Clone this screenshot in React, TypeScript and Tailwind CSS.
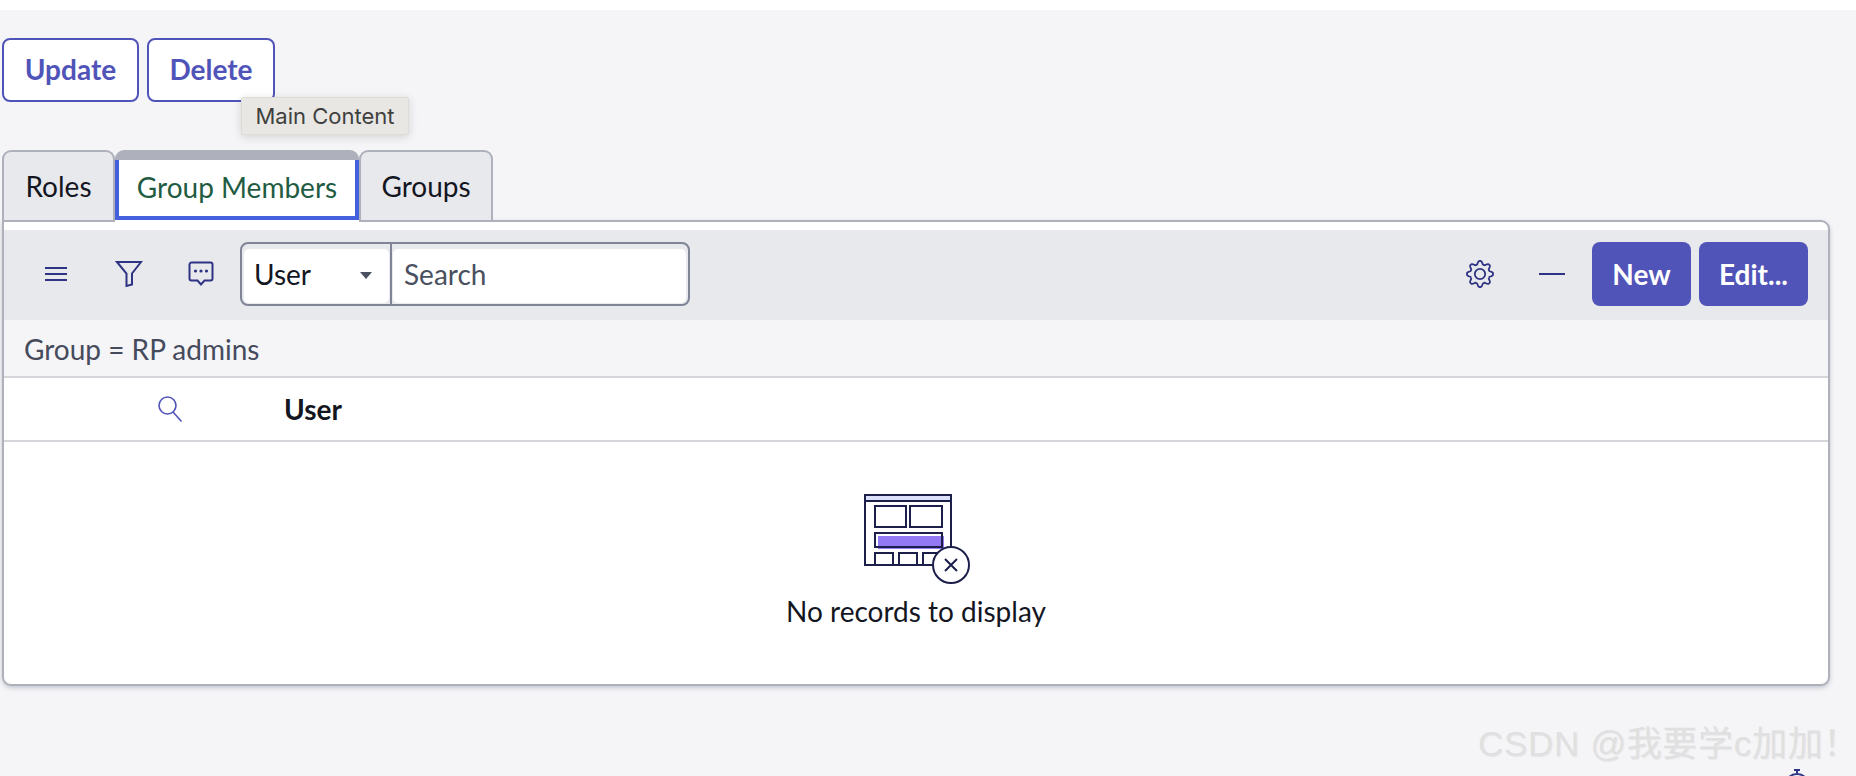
const navy = "#2e3383";

const MenuIcon = () => (
  <svg width="24" height="16" viewBox="0 0 24 16" fill="none" stroke={navy} strokeWidth="2">
    <path d="M1 2h22M1 8h22M1 14h22" />
  </svg>
);

const FilterIcon = () => (
  <svg width="28" height="28" viewBox="0 0 28 28" fill="none" stroke={navy} strokeWidth="2">
    <path d="M2 2h24L17 13.5V24.5L11.5 26V13.5Z" />
  </svg>
);

const ChatIcon = () => (
  <svg width="26" height="26" viewBox="0 0 26 26" fill="none" stroke={navy} strokeWidth="2">
    <path d="M3.5 1.5h19a2 2 0 0 1 2 2v14a2 2 0 0 1-2 2h-6L13 23.5 9.5 19.5h-6a2 2 0 0 1-2-2v-14a2 2 0 0 1 2-2Z" />
    <circle cx="7.5" cy="10" r="1.6" fill={navy} stroke="none" />
    <circle cx="13" cy="10" r="1.6" fill={navy} stroke="none" />
    <circle cx="18.5" cy="10" r="1.6" fill={navy} stroke="none" />
  </svg>
);

// 8 rounded teeth, same outline all the way round
const gearPath = Array.from({ length: 160 }, (_, i) => {
  const a = (i / 160) * Math.PI * 2;
  const wave = Math.max(-1, Math.min(1, 1.3 * Math.cos(8 * a)));
  const r = 11.4 + 1.6 * wave;
  return `${i === 0 ? "M" : "L"}${(15 + r * Math.cos(a)).toFixed(2)} ${(15 + r * Math.sin(a)).toFixed(2)}`;
}).join(" ") + "Z";

const GearIcon = () => (
  <svg width="30" height="30" viewBox="0 0 30 30" fill="none" stroke={navy} strokeWidth="1.8" strokeLinejoin="round">
    <path d={gearPath} />
    <circle cx="15" cy="15" r="5.2" />
  </svg>
);

const SearchIcon = () => (
  <svg width="26" height="28" viewBox="0 0 26 28" fill="none" stroke="#5054b8" strokeWidth="1.6">
    <circle cx="10.5" cy="10.5" r="8.5" />
    <path d="M16 17l8.5 9.5" />
  </svg>
);

const EmptyIcon = () => (
  <svg width="108" height="92" viewBox="0 0 108 92" fill="none" stroke="#1c1f4a" strokeWidth="2">
    <rect x="2" y="2" width="86" height="70" fill="#fff" />
    <rect x="2" y="2" width="86" height="6" fill="#dcdffa" />
    <rect x="12" y="13" width="31" height="21" />
    <rect x="47" y="13" width="32" height="21" />
    <rect x="15" y="43" width="66" height="13" fill="#9479f4" stroke="none" />
    <rect x="12" y="40" width="67" height="14" />
    <rect x="12" y="60" width="18" height="12" />
    <rect x="36" y="60" width="18" height="12" />
    <rect x="60" y="60" width="18" height="12" />
    <circle cx="88" cy="72" r="18" fill="#fff" />
    <path d="M82 66l12 12M94 66l-12 12" />
  </svg>
);

function OutlineButton({ label, width }: { label: string; width: string }) {
  return (
    <button className={`h-[64px] ${width} rounded-[8px] border-2 border-[#5054b8] bg-white pb-[2px] text-[28px] font-bold text-[#5054b8]`}>
      {label}
    </button>
  );
}

function SolidButton({ label, width }: { label: string; width: string }) {
  return (
    <button className={`h-[64px] ${width} rounded-[8px] bg-[#5054b8] text-[28px] font-bold text-white`}>
      {label}
    </button>
  );
}

function Tab({ label, width }: { label: string; width: string }) {
  return (
    <div className={`flex h-[70px] ${width} items-center justify-center rounded-t-[9px] border-2 border-b-0 border-[#aeb1bc] bg-[#e8e9ed] text-[28px] text-[#14161f]`}>
      {label}
    </div>
  );
}

export default function App() {
  return (
    <div className="relative h-[776px] overflow-hidden bg-[#f5f5f8] font-['Lato','Liberation_Sans',sans-serif]">
      <div className="h-[10px] bg-white" />

      <div className="flex gap-[8px] pl-[2px] pt-[28px]">
        <OutlineButton label="Update" width="w-[137px]" />
        <OutlineButton label="Delete" width="w-[128px]" />
      </div>

      <div className="absolute left-[241px] top-[97px] flex h-[38px] w-[168px] items-center justify-center rounded-[2px] border border-[#dddcd7] bg-[#e8e7e3] font-['Inter',sans-serif] text-[22px] text-[#3f3f3f] shadow-[0_2px_10px_rgba(0,0,0,0.14)]">
        Main Content
      </div>

      <div className="flex items-start pl-[2px] pt-[48px]">
        <Tab label="Roles" width="w-[113px]" />
        <div className="relative z-10 mb-[-2px] flex h-[72px] w-[244px] flex-col border-b-2 border-white">
          <div className="h-[10px] rounded-t-[9px] bg-[#aeb1bc]" />
          <div className="flex flex-1 items-center justify-center border-4 border-t-0 border-[#4560dc] bg-white pb-[2px] text-[28px] text-[#1f5c43]">
            Group Members
          </div>
        </div>
        <Tab label="Groups" width="w-[134px]" />
      </div>

      <div className="ml-[2px] w-[1828px] rounded-b-[9px] rounded-tr-[9px] border-2 border-[#aeb1bc] bg-white pt-[8px] shadow-[0_2px_4px_rgba(60,60,90,0.25)]">
        <div className="flex h-[90px] items-center bg-[#e8e9ed] pb-[3px] pl-[40px] pr-[20px]">
          <MenuIcon />
          <div className="ml-[47px]"><FilterIcon /></div>
          <div className="ml-[45px]"><ChatIcon /></div>
          <div className="ml-[26px] flex h-[64px] w-[450px] overflow-hidden rounded-[8px] border-2 border-[#7f8496]">
            <div className="w-[150px] border-r-2 border-[#7f8496] pb-[1px] pl-[2px] pr-[1px] pt-[5px]">
              <div className="flex h-full items-center justify-between rounded-[5px] bg-white pb-[3px] pl-[10px] pr-[17px] text-[28px] text-[#14161f]">
                User
                <span className="mt-[3px] h-0 w-0 border-x-[6px] border-t-[7px] border-x-transparent border-t-[#4a5060]" />
              </div>
            </div>
            <div className="flex-1 pb-[1px] pl-[1px] pr-[2px] pt-[5px]">
              <div className="flex h-full items-center rounded-[5px] bg-white pb-[3px] pl-[11px] text-[28px] text-[#4a5060]">
                Search
              </div>
            </div>
          </div>
          <div className="ml-auto flex items-center">
            <GearIcon />
            <div className="ml-[44px] h-[2px] w-[26px] bg-[#2e3383]" />
            <div className="ml-[27px] flex gap-[8px]">
              <SolidButton label="New" width="w-[99px]" />
              <SolidButton label="Edit..." width="w-[109px]" />
            </div>
          </div>
        </div>

        <div className="flex h-[58px] items-center border-b-2 border-[#d5d6dc] bg-[#f5f5f8] pl-[20px] pt-[2px] text-[28px] text-[#454b5c]">
          Group = RP admins
        </div>

        <div className="flex h-[64px] items-center border-b-2 border-[#d5d6dc] bg-white pl-[153px]">
          <SearchIcon />
          <span className="ml-[101px] text-[28px] font-bold text-[#14161f]">User</span>
        </div>

        <div className="flex h-[242px] flex-col items-center rounded-b-[9px] bg-white pt-[51px]">
          <div className="ml-[2px]"><EmptyIcon /></div>
          <div className="mt-[5px] text-[28px] text-[#14161f]">No records to display</div>
        </div>
      </div>

      <div className="absolute left-[1478px] top-[723px] whitespace-nowrap font-['Liberation_Sans','Noto_Sans_CJK_SC',sans-serif] text-[35px] leading-[42px] tracking-[0.7px] text-[#e0e0e0] [text-shadow:1px_1px_1px_rgba(0,0,0,0.06)]">
        CSDN @我要学c加加<span className="[font-feature-settings:'halt']">！</span>
      </div>

      <svg className="absolute left-[1784px] top-[768px]" width="26" height="8" viewBox="0 0 26 8" fill="none" stroke={navy} strokeWidth="2">
        <path d="M10 2h6M13 2v3" />
        <circle cx="13" cy="18" r="12" />
      </svg>
    </div>
  );
}
